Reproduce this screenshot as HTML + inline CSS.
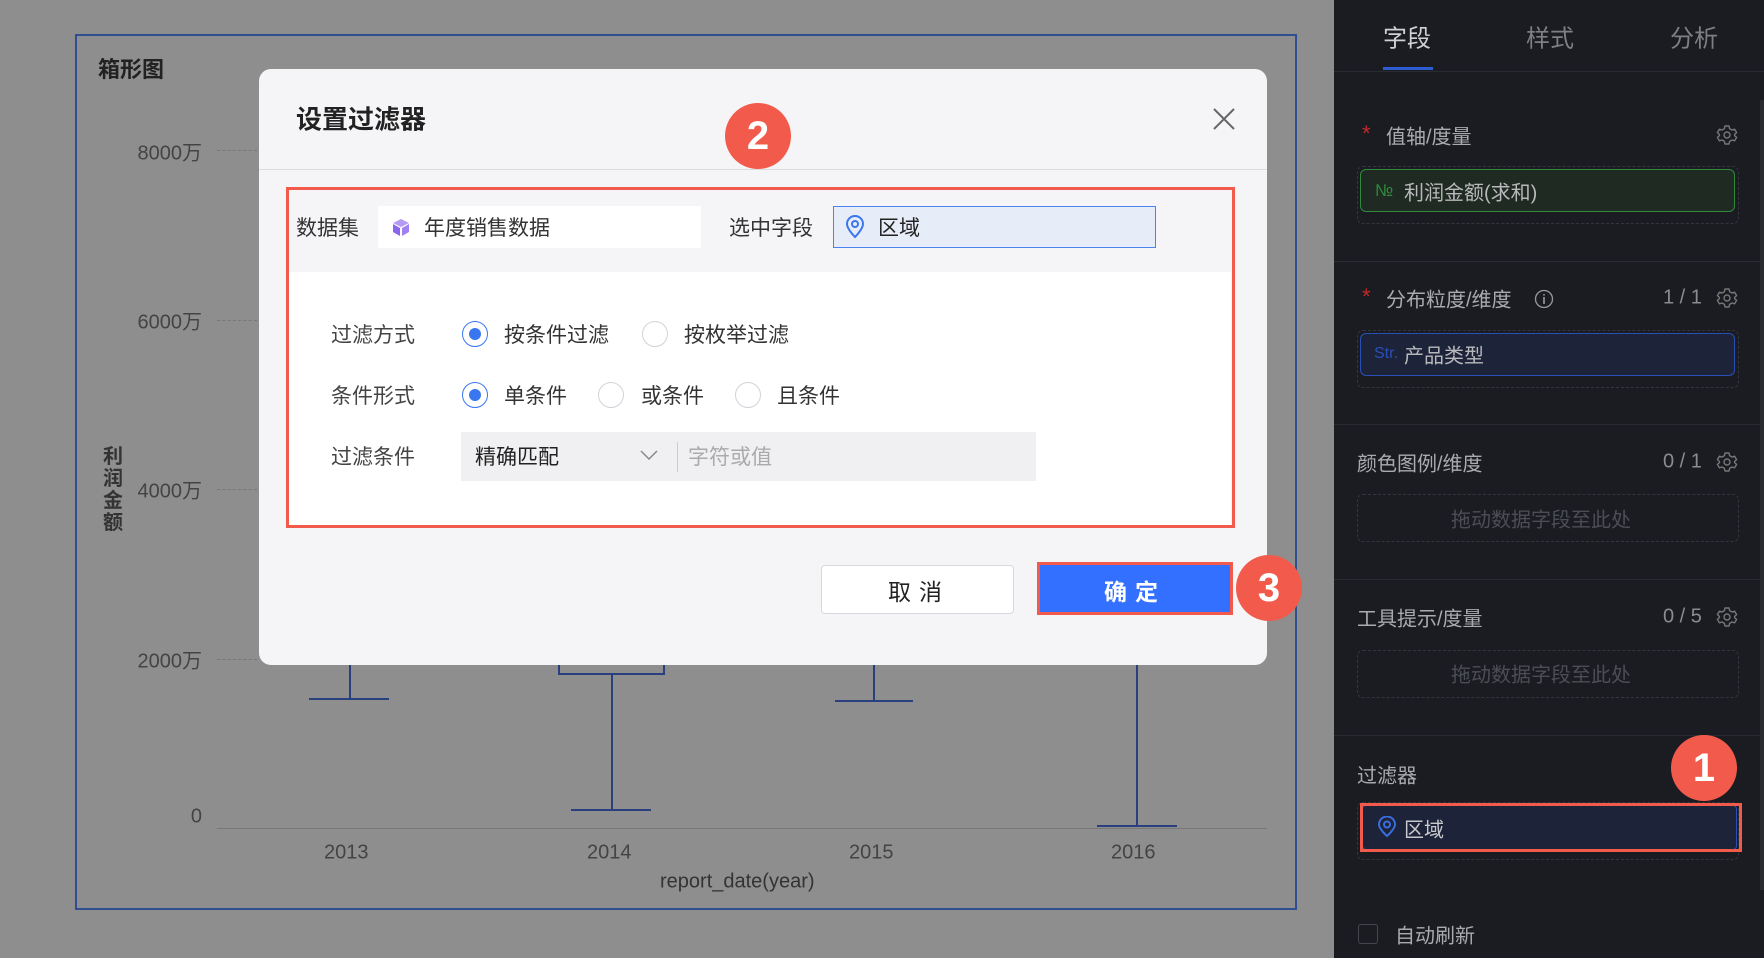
<!DOCTYPE html>
<html><head><meta charset="utf-8"><style>
*{margin:0;padding:0;box-sizing:border-box}
body{width:1764px;height:958px;overflow:hidden;background:#8e8e8e;position:relative;font-family:"Liberation Sans","Noto Sans CJK SC",sans-serif}
.a{position:absolute;white-space:nowrap}
.t{transform:translateY(-50%)}
.side{left:1334px;top:0;width:430px;height:958px;background:#1b1c21}
.sl{color:#a9abb0;font-size:20px}
.gear{width:22px;height:22px}
.hl{height:1px;background:#2a2c33;left:1334px;width:430px}
.dash{border:1px dashed #34363d;border-radius:6px}
.ph{color:#4c4e55;font-size:20px}
.radio{width:26px;height:26px;border-radius:50%;border:1px solid #d0d3d9;background:#fff}
.radio.on{border:1.5px solid #3a76f0}
.radio.on::after{content:"";position:absolute;left:6px;top:6px;width:12px;height:12px;border-radius:50%;background:#3a76f0}
.dl{font-size:21px;color:#333}
.circ{width:66px;height:66px;border-radius:50%;background:#f25b4b;color:#fff;font-size:40px;text-align:center;line-height:66px;font-weight:bold}
</style></head><body>
<svg width="0" height="0" style="position:absolute"><defs><symbol id="g" viewBox="0 0 22 22"><path d="M9 2H13L13.6 4.6L16 6L18.6 5.2L20.6 8.6L18.6 10.4V11.6L20.6 13.4L18.6 16.8L16 16L13.6 17.4L13 20H9L8.4 17.4L6 16L3.4 16.8L1.4 13.4L3.4 11.6V10.4L1.4 8.6L3.4 5.2L6 6L8.4 4.6Z" fill="none" stroke="#777" stroke-width="1.4" stroke-linejoin="round"/><circle cx="11" cy="11" r="3" fill="none" stroke="#777" stroke-width="1.4"/></symbol></defs></svg>
<!-- chart -->
<div class="a" style="left:75px;top:34px;width:1222px;height:876px;border:2px solid #2f4f95"></div>
<div class="a" style="left:98px;top:52px;font-size:22px;font-weight:bold;color:#222">箱形图</div>
<div class="a t" style="right:1562px;top:151px;font-size:20px;color:#444">8000万</div>
<div class="a t" style="right:1562px;top:320px;font-size:20px;color:#444">6000万</div>
<div class="a t" style="right:1562px;top:489px;font-size:20px;color:#444">4000万</div>
<div class="a t" style="right:1562px;top:659px;font-size:20px;color:#444">2000万</div>
<div class="a t" style="right:1562px;top:817px;font-size:20px;color:#444">0</div>
<div class="a" style="left:217px;top:150px;width:40px;border-top:1px dashed #777"></div>
<div class="a" style="left:217px;top:320px;width:40px;border-top:1px dashed #777"></div>
<div class="a" style="left:217px;top:489px;width:40px;border-top:1px dashed #777"></div>
<div class="a" style="left:217px;top:659px;width:40px;border-top:1px dashed #777"></div>
<div class="a" style="left:103px;top:446px;width:22px;font-size:20px;line-height:22px;color:#333;white-space:normal;font-weight:bold">利润金额</div>
<div class="a" style="left:217px;top:828px;width:1050px;height:1px;background:#777"></div>
<div class="a" style="left:349px;top:664px;width:2px;height:35px;background:#2a3f7d"></div>
<div class="a" style="left:309px;top:698px;width:80px;height:2px;background:#2a3f7d"></div>
<div class="a" style="left:558px;top:660px;width:107px;height:15px;border:2px solid #2a3f7d;border-top:none"></div>
<div class="a" style="left:611px;top:675px;width:2px;height:134px;background:#2a3f7d"></div>
<div class="a" style="left:571px;top:809px;width:80px;height:2px;background:#2a3f7d"></div>
<div class="a" style="left:873px;top:664px;width:2px;height:38px;background:#2a3f7d"></div>
<div class="a" style="left:835px;top:700px;width:78px;height:2px;background:#2a3f7d"></div>
<div class="a" style="left:1136px;top:664px;width:2px;height:162px;background:#2a3f7d"></div>
<div class="a" style="left:1097px;top:825px;width:80px;height:2px;background:#2a3f7d"></div>
<div class="a t" style="left:324px;top:853px;font-size:20px;color:#444">2013</div>
<div class="a t" style="left:587px;top:853px;font-size:20px;color:#444">2014</div>
<div class="a t" style="left:849px;top:853px;font-size:20px;color:#444">2015</div>
<div class="a t" style="left:1111px;top:853px;font-size:20px;color:#444">2016</div>
<div class="a t" style="left:660px;top:882px;font-size:20px;color:#333">report_date(year)</div>

<!-- modal -->
<div class="a" style="left:259px;top:69px;width:1008px;height:596px;background:#f5f5f7;border-radius:12px"></div>
<div class="a t" style="left:296px;top:118px;font-size:26px;font-weight:bold;color:#222">设置过滤器</div>
<svg class="a" style="left:1212px;top:107px" width="24" height="24" viewBox="0 0 24 24"><path d="M2 2L22 22M22 2L2 22" stroke="#666" stroke-width="2"/></svg>
<div class="a" style="left:259px;top:169px;width:1008px;height:1px;background:#dcdcdf"></div>
<div class="a" style="left:289px;top:272px;width:942px;height:253px;background:#fff"></div>
<div class="a" style="left:286px;top:187px;width:949px;height:341px;border:3px solid #f25b4b"></div>
<div class="a t dl" style="left:296px;top:227px">数据集</div>
<div class="a" style="left:378px;top:206px;width:323px;height:42px;background:#fff"></div>
<svg class="a" style="left:392px;top:218px" width="18" height="19" viewBox="0 0 18 19"><path d="M9 1L17 5L9 9L1 5Z" fill="#b49af5"/><path d="M1 6L8 10V18L1 14Z" fill="#8a66ee"/><path d="M17 6L10 10V18L17 14Z" fill="#a080f2"/></svg>
<div class="a t dl" style="left:424px;top:227px">年度销售数据</div>
<div class="a t dl" style="left:729px;top:227px">选中字段</div>
<div class="a" style="left:833px;top:206px;width:323px;height:42px;background:#e7edf8;border:1.5px solid #4b83f0"></div>
<svg class="a" style="left:845px;top:215px" width="20" height="24" viewBox="0 0 20 24"><path d="M10 22C10 22 2 14 2 9A8 8 0 0 1 18 9C18 14 10 22 10 22Z" fill="none" stroke="#3a76f0" stroke-width="2"/><circle cx="10" cy="9" r="3" fill="none" stroke="#3a76f0" stroke-width="2"/></svg>
<div class="a t dl" style="left:878px;top:227px;color:#222">区域</div>

<div class="a t dl" style="left:331px;top:334px;color:#444">过滤方式</div>
<div class="a radio on t" style="left:462px;top:334px"></div>
<div class="a t dl" style="left:504px;top:334px">按条件过滤</div>
<div class="a radio t" style="left:642px;top:334px"></div>
<div class="a t dl" style="left:684px;top:334px">按枚举过滤</div>

<div class="a t dl" style="left:331px;top:395px;color:#444">条件形式</div>
<div class="a radio on t" style="left:462px;top:395px"></div>
<div class="a t dl" style="left:504px;top:395px">单条件</div>
<div class="a radio t" style="left:598px;top:395px"></div>
<div class="a t dl" style="left:641px;top:395px">或条件</div>
<div class="a radio t" style="left:735px;top:395px"></div>
<div class="a t dl" style="left:777px;top:395px">且条件</div>

<div class="a t dl" style="left:331px;top:456px;color:#444">过滤条件</div>
<div class="a" style="left:461px;top:432px;width:575px;height:49px;background:#f0f0f2"></div>
<div class="a t dl" style="left:475px;top:456px;color:#222">精确匹配</div>
<svg class="a" style="left:640px;top:449px" width="18" height="12" viewBox="0 0 18 12"><path d="M1 2L9 10L17 2" fill="none" stroke="#888" stroke-width="1.5"/></svg>
<div class="a" style="left:677px;top:442px;width:1px;height:30px;background:#ccc"></div>
<div class="a t dl" style="left:688px;top:456px;color:#aaa">字符或值</div>

<div class="a" style="left:821px;top:565px;width:193px;height:49px;background:#fff;border:1px solid #d8d8dc;border-radius:4px"></div>
<div class="a t" style="left:888px;top:590px;font-size:23px;color:#222;letter-spacing:8px">取消</div>
<div class="a" style="left:1037px;top:562px;width:196px;height:53px;background:#3370ff;border:3px solid #f25b4b"></div>
<div class="a t" style="left:1104px;top:590px;font-size:23px;color:#fff;letter-spacing:8px;font-weight:bold">确定</div>

<div class="a circ" style="left:725px;top:103px">2</div>
<div class="a circ" style="left:1236px;top:555px">3</div>

<!-- sidebar -->
<div class="a side"></div>
<div class="a t" style="left:1383px;top:36px;font-size:24px;color:#d0d1d4">字段</div>
<div class="a t" style="left:1526px;top:36px;font-size:24px;color:#7d7f85">样式</div>
<div class="a t" style="left:1670px;top:36px;font-size:24px;color:#7d7f85">分析</div>
<div class="a" style="left:1383px;top:67px;width:50px;height:3px;background:#2f5bd0"></div>
<div class="a hl" style="top:71px"></div>
<div class="a hl" style="top:261px"></div>
<div class="a hl" style="top:424px"></div>
<div class="a hl" style="top:579px"></div>
<div class="a hl" style="top:735px"></div>
<div class="a" style="left:1760px;top:100px;width:4px;height:790px;background:#2a2b30"></div>

<div class="a t" style="left:1362px;top:134px;font-size:22px;color:#c62828">*</div>
<div class="a t sl" style="left:1386px;top:135px">值轴/度量</div>
<svg class="a gear" style="left:1716px;top:124px"><use href="#g"/></svg>
<div class="a dash" style="left:1357px;top:166px;width:382px;height:58px"></div>
<div class="a" style="left:1360px;top:169px;width:375px;height:43px;border:1.5px solid #2f8a3c;border-radius:6px;background:#1e2a22"></div>
<div class="a t" style="left:1375px;top:191px;font-size:17px;color:#2f8a3c">№</div>
<div class="a t sl" style="left:1404px;top:191px;color:#b8b9bc">利润金额(求和)</div>

<div class="a t" style="left:1362px;top:297px;font-size:22px;color:#c62828">*</div>
<div class="a t sl" style="left:1386px;top:298px">分布粒度/维度</div>
<svg class="a" style="left:1534px;top:289px" width="20" height="20" viewBox="0 0 20 20"><circle cx="10" cy="10" r="8.5" fill="none" stroke="#999" stroke-width="1.3"/><path d="M10 8V15M10 5V6.5" stroke="#999" stroke-width="1.6"/></svg>
<div class="a t sl" style="left:1663px;top:298px;color:#8a8c91">1 / 1</div>
<svg class="a gear" style="left:1716px;top:287px"><use href="#g"/></svg>
<div class="a dash" style="left:1357px;top:330px;width:382px;height:58px"></div>
<div class="a" style="left:1360px;top:333px;width:375px;height:43px;border:1.5px solid #2a50b8;border-radius:6px;background:#1d2338"></div>
<div class="a t" style="left:1374px;top:354px;font-size:16px;color:#2a50b8">Str.</div>
<div class="a t sl" style="left:1404px;top:354px;color:#b8b9bc">产品类型</div>

<div class="a t sl" style="left:1357px;top:462px">颜色图例/维度</div>
<div class="a t sl" style="left:1663px;top:462px;color:#8a8c91">0 / 1</div>
<svg class="a gear" style="left:1716px;top:451px"><use href="#g"/></svg>
<div class="a dash" style="left:1357px;top:494px;width:382px;height:48px"></div>
<div class="a t ph" style="left:1451px;top:518px">拖动数据字段至此处</div>

<div class="a t sl" style="left:1357px;top:617px">工具提示/度量</div>
<div class="a t sl" style="left:1663px;top:617px;color:#8a8c91">0 / 5</div>
<svg class="a gear" style="left:1716px;top:606px"><use href="#g"/></svg>
<div class="a dash" style="left:1357px;top:650px;width:382px;height:48px"></div>
<div class="a t ph" style="left:1451px;top:673px">拖动数据字段至此处</div>

<div class="a t sl" style="left:1357px;top:774px">过滤器</div>
<div class="a circ" style="left:1671px;top:735px">1</div>
<div class="a dash" style="left:1357px;top:802px;width:382px;height:58px"></div>
<div class="a" style="left:1362px;top:805px;width:375px;height:45px;background:#1d2338;border:1.5px solid #2a50b8;border-radius:4px"></div>
<div class="a" style="left:1360px;top:803px;width:382px;height:49px;border:3px solid #f25b4b"></div>
<svg class="a" style="left:1377px;top:816px" width="20" height="22" viewBox="0 0 20 22"><path d="M10 20C10 20 2 13 2 8.5A8 8 0 0 1 18 8.5C18 13 10 20 10 20Z" fill="none" stroke="#3a6ee0" stroke-width="2"/><circle cx="10" cy="8.5" r="3" fill="none" stroke="#3a6ee0" stroke-width="2"/></svg>
<div class="a t sl" style="left:1404px;top:828px;color:#c8c9cc">区域</div>

<div class="a" style="left:1358px;top:924px;width:20px;height:20px;border:1px solid #44464d;border-radius:3px"></div>
<div class="a t sl" style="left:1395px;top:934px">自动刷新</div>
</body></html>
